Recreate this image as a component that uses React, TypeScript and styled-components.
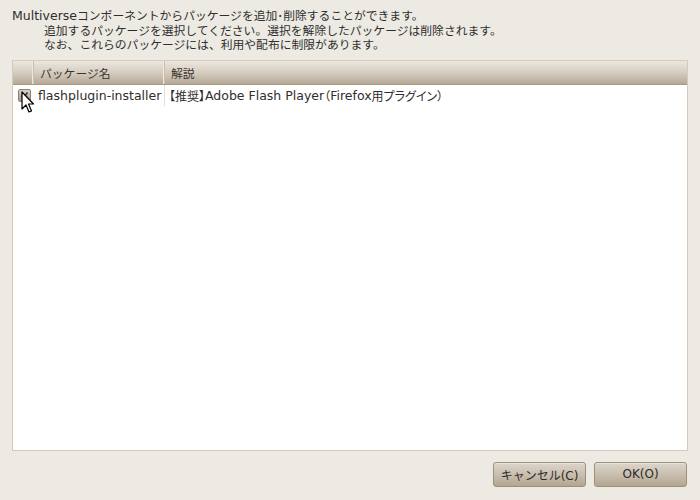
import * as React from 'react';
import styled, { createGlobalStyle } from 'styled-components';

const GlobalStyle = createGlobalStyle`
  html, body {
    margin: 0;
    padding: 0;
    background: #edeae3;
  }
  body {
    font-family: "DejaVu Sans", "Noto Sans CJK JP", sans-serif;
    font-size: 11.8px;
    color: #2e2e2e;
  }
`;

// latin runs render a little larger than the japanese ones
const Latin = styled.span`
  font-size: 12.5px;
`;

const Window = styled.div`
  width: 700px;
  height: 500px;
  box-sizing: border-box;
  padding: 9px 12px 0 12px;
  display: flex;
  flex-direction: column;
  background: #edeae3;
`;

const Message = styled.div`
  line-height: 14.5px;
  margin-bottom: 7px;
`;

const Line = styled.div<{ indent?: boolean }>`
  padding-left: ${(p) => (p.indent ? '32px' : '0')};
  white-space: nowrap;
`;

const Tree = styled.div`
  position: relative;
  width: 676px;
  height: 391px;
  box-sizing: border-box;
  border: 1px solid #d6cbb8;
  background: #fff;
  display: flex;
  flex-direction: column;
`;

const Header = styled.div`
  display: flex;
  height: 23px;
  background: linear-gradient(to bottom, #ebe6df 0%, #d6cdc0 50%, #b5a996 100%);
  border-bottom: 1px solid #a89b86;
`;

const HeaderCell = styled.div<{ width?: number }>`
  width: ${(p) => (p.width ? `${p.width}px` : 'auto')};
  flex: ${(p) => (p.width ? 'none' : '1')};
  box-sizing: border-box;
  padding-left: 6px;
  display: flex;
  align-items: center;
  color: #3a3530;
  border-right: 1px solid #c9bfae;
  box-shadow: inset -1px 0 0 #eee8df;
  &:last-child {
    border-right: none;
    box-shadow: none;
  }
`;

const Row = styled.div`
  display: flex;
  height: 21px;
`;

const Cell = styled.div<{ width?: number; divided?: boolean }>`
  width: ${(p) => (p.width ? `${p.width}px` : 'auto')};
  flex: ${(p) => (p.width ? 'none' : '1')};
  box-sizing: border-box;
  display: flex;
  align-items: center;
  padding-left: 4px;
  white-space: nowrap;
  color: #2e2e2e;
  border-right: ${(p) => (p.divided ? '1px solid #e4e0d9' : 'none')};
`;

const DescCell = styled(Cell)`
  font-size: 12px;
  font-feature-settings: "palt";
`;

const CheckCell = styled(Cell)`
  padding-left: 5px;
`;

const Check = styled.div`
  width: 11px;
  height: 11px;
  border: 1px solid #8d8271;
  border-radius: 2px;
  background: linear-gradient(to bottom, #d8d1c6, #a89c8a);
  display: flex;
  align-items: center;
  justify-content: center;
`;

const Cursor = styled.svg`
  position: absolute;
  left: 8px;
  top: 30px;
`;

const Footer = styled.div`
  display: flex;
  justify-content: flex-end;
  gap: 8px;
  padding: 11px 1px 0 0;
`;

const Button = styled.button`
  width: 93px;
  height: 25px;
  box-sizing: border-box;
  border: 1px solid #9d907c;
  border-radius: 3px;
  background: linear-gradient(to bottom, #dcd5ca 0%, #c9bfb0 50%, #b3a691 100%);
  box-shadow: inset 0 1px 0 rgba(255, 255, 255, 0.35);
  font-family: "DejaVu Sans", "Noto Sans CJK JP", sans-serif;
  font-size: 12px;
  color: #2f2b26;
  padding: 0;
`;

export default function App() {
  return (
    <>
      <GlobalStyle />
      <Window>
        <Message>
          <Line><Latin>Multiverse</Latin>コンポーネントからパッケージを追加･削除することができます。</Line>
          <Line indent>追加するパッケージを選択してください。選択を解除したパッケージは削除されます。</Line>
          <Line indent>なお、これらのパッケージには、利用や配布に制限があります。</Line>
        </Message>
        <Tree>
          <Header>
            <HeaderCell width={21} />
            <HeaderCell width={131}>パッケージ名</HeaderCell>
            <HeaderCell>解説</HeaderCell>
          </Header>
          <Row>
            <CheckCell width={21}>
              <Check>
                <svg width="9" height="9" viewBox="0 0 9 9">
                  <path d="M1.5 4.5 L3.5 7 L7.5 1.5" stroke="#3d372f" strokeWidth="1.6" fill="none" />
                </svg>
              </Check>
            </CheckCell>
            <Cell width={131} divided><Latin>flashplugin-installer</Latin></Cell>
            <DescCell>
              【推奨】<Latin>Adobe Flash Player</Latin>（<Latin>Firefox</Latin>用プラグイン）
            </DescCell>
          </Row>
          <Cursor width="14" height="24" viewBox="0 0 14 24">
            <path
              d="M1 1 L1 18 L5 14 L8 21 L10.5 20 L7.5 13 L12.5 13 Z"
              fill="#fff"
              stroke="#000"
              strokeWidth="1.2"
              strokeLinejoin="round"
            />
          </Cursor>
        </Tree>
        <Footer>
          <Button>キャンセル(C)</Button>
          <Button>OK(O)</Button>
        </Footer>
      </Window>
    </>
  );
}
